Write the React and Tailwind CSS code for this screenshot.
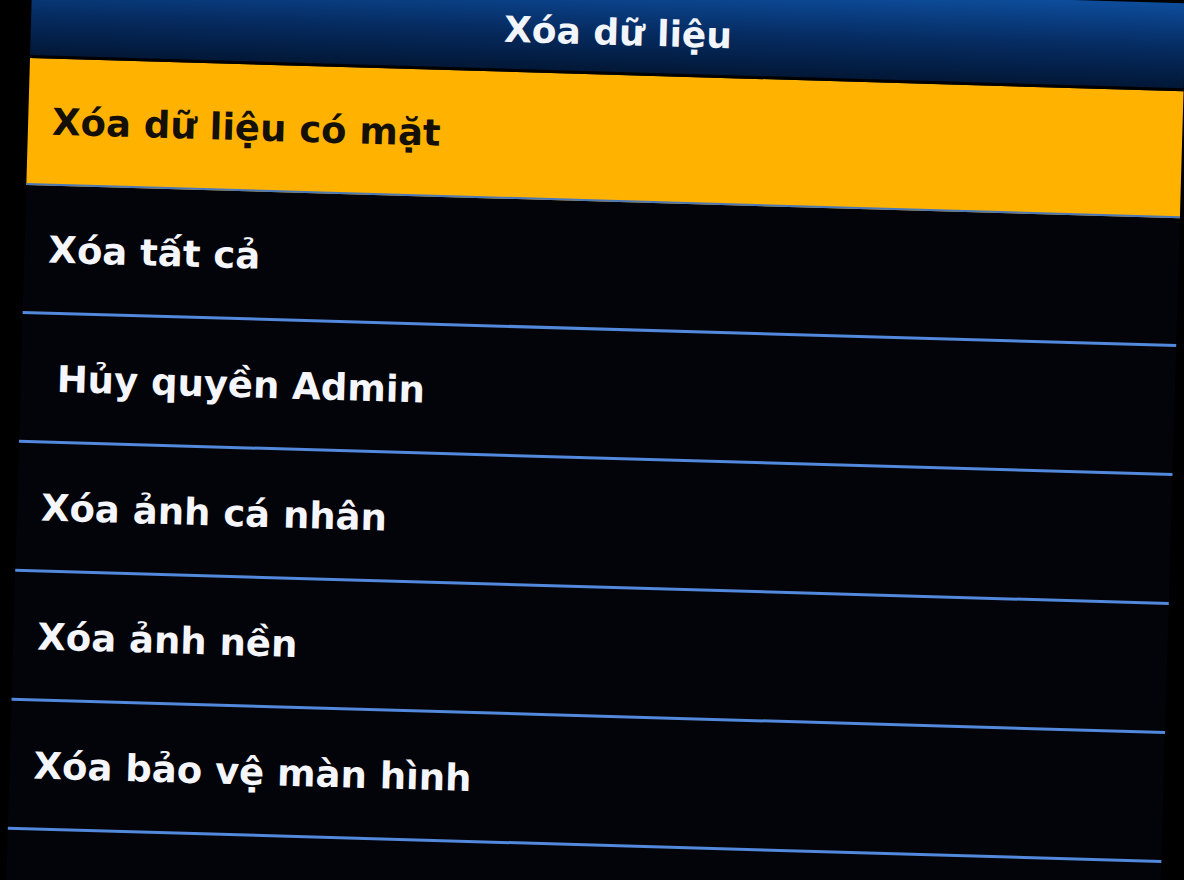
const items = [
  { label: "Xóa tất cả" },
  { label: "Hủy quyền Admin", indent: true },
  { label: "Xóa ảnh cá nhân" },
  { label: "Xóa ảnh nền" },
  { label: "Xóa bảo vệ màn hình" },
];

export default function App() {
  return (
    <div
      className="w-[1184px] h-[880px] bg-black overflow-hidden"
      style={{ fontFamily: '"DejaVu Sans", "Liberation Sans", sans-serif' }}
    >
      {/* the device screen, tilted like the photo */}
      <div className="w-[1154px] ml-[30px] -mt-[30px] origin-[0_88px] rotate-[1.65deg] bg-[#03040a]">
        {/* title bar */}
        <div className="h-[88px] flex flex-col bg-gradient-to-b from-[#0d4d9c] via-[#062c62] to-[#021634]">
          <div className="flex-1 flex items-center justify-center pl-[20px] pt-[6px] text-[36px] font-bold text-[#f2f5fb]">
            Xóa dữ liệu
          </div>
          <div className="h-[3px] bg-black" />
        </div>

        {/* selected row */}
        <div className="h-[127px] flex flex-col bg-[#ffb200]">
          <div className="flex-1 flex items-center pl-[24px] pt-[3px] text-[37px] font-bold text-[#141008]">
            Xóa dữ liệu có mặt
          </div>
          <div className="h-[2px] bg-[#4a78b8]" />
        </div>

        {items.map((item) => (
          <div key={item.label} className="h-[129px] flex flex-col">
            <div
              className={`flex-1 flex items-center pt-[3px] text-[37px] font-bold text-[#f4f6fb] ${
                item.indent ? "pl-[36px]" : "pl-[24px]"
              }`}
            >
              {item.label}
            </div>
            <div className="h-[3px] bg-[#5289dc]" />
          </div>
        ))}

        <div className="h-[120px]" />
      </div>
    </div>
  );
}
